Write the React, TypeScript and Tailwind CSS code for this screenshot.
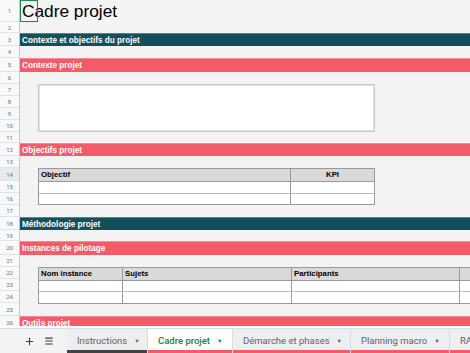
import React from "react";
import { Plus, Menu } from "lucide-react";

// row heights, in the order the sheet shows them
const rowHeights = [22, 11, 13, 12, 14, 12, 12, 12, 12, 12, 11, 13, 12, 13, 12, 12, 12, 13, 11, 14, 12, 12, 12, 12, 13, 14];

const dark = "bg-[#134f5c]";
const pink = "bg-[#f45b69]";

function Band({ color, label, h = "h-[13px]" }: { color: string; label: string; h?: string }) {
  return (
    <div className={`${h} shrink-0 ${color} flex items-start pt-[2px] pl-[2px] text-white font-bold text-[8.2px] leading-[9px] border-t border-t-white/30 whitespace-nowrap`}>
      {label}
    </div>
  );
}

const Gap = ({ h = "h-[12px]" }: { h?: string }) => <div className={`${h} shrink-0`} />;

const tabs = [
  { label: "Instructions", w: "w-[81px]", stripe: "bg-[#434343]", active: false },
  { label: "Cadre projet", w: "w-[85px]", stripe: "bg-[#f45b69]", active: true },
  { label: "Démarche et phases", w: "w-[118px]", stripe: "bg-[#f45b69]", active: false },
  { label: "Planning macro", w: "w-[99px]", stripe: "bg-[#f45b69]", active: false },
  { label: "RACI", w: "w-[60px]", stripe: "bg-[#f45b69]", active: false },
];

export default function App() {
  return (
    <div className="w-[470px] h-[353px] overflow-hidden bg-[#f3f3f3] flex flex-col font-['Liberation_Sans',Arial,sans-serif]">
      <div className="flex h-[326px] shrink-0 overflow-hidden">
        {/* Row numbers */}
        <div className="w-[20px] shrink-0 bg-[#f8f9fa] border-r border-[#c4c7c5] flex flex-col">
          {rowHeights.map((h, i) => (
            <div
              key={i}
              style={{ height: h }}
              className={`shrink-0 flex items-center justify-center border-b border-[#e2e3e3] text-[6px] text-[#6f6f6f] font-['Roboto',sans-serif] ${
                i === 13 ? "bg-[#e8eaed]" : ""
              }`}
            >
              {i + 1}
            </div>
          ))}
        </div>

        {/* Sheet body */}
        <div className="flex-1 flex flex-col min-w-0">
          <div className="h-[22px] shrink-0 relative">
            <div className="absolute left-0 top-0 w-[18px] h-[22px] border border-[#1a8b4a]" />
            <div className="pl-[2px] pt-[1px] text-[17.3px] leading-[20px] text-black whitespace-nowrap">Cadre projet</div>
          </div>
          <Gap h="h-[11px]" />
          <Band color={dark} label="Contexte et objectifs du projet" />
          <Gap />
          <Band color={pink} label="Contexte projet" h="h-[14px]" />
          <Gap />
          <div className="h-[48px] shrink-0 pl-[18px]">
            <div className="w-[337px] h-[48px] bg-white border border-[#c6c6c6] shadow-[inset_0_0_0_1px_#e4e4e4]" />
          </div>
          <Gap h="h-[11px]" />
          <Band color={pink} label="Objectifs projet" />
          <Gap />
          <div className="h-[37px] shrink-0 pl-[18px]">
            <div className="w-[337px] border border-[#9a9a9a] bg-white text-[7.8px] font-bold text-black">
              <div className="flex h-[13px] bg-[#d9d9d9] border-b border-[#9a9a9a]">
                <div className="w-[252px] border-r border-[#9a9a9a] flex items-center pl-[2px]">Objectif</div>
                <div className="flex-1 flex items-center justify-center">KPI</div>
              </div>
              <div className="flex h-[12px] border-b border-[#bcbcbc]">
                <div className="w-[252px] border-r border-[#9a9a9a]" />
                <div className="flex-1" />
              </div>
              <div className="flex h-[10px]">
                <div className="w-[252px] border-r border-[#9a9a9a]" />
                <div className="flex-1" />
              </div>
            </div>
          </div>
          <Gap />
          <Band color={dark} label="Méthodologie projet" />
          <Gap h="h-[11px]" />
          <Band color={pink} label="Instances de pilotage" h="h-[14px]" />
          <Gap />
          <div className="h-[36px] shrink-0 pl-[18px]">
            <div className="w-[440px] border border-[#9a9a9a] bg-white text-[7.8px] font-bold text-black">
              <div className="flex h-[13px] bg-[#d9d9d9] border-b border-[#9a9a9a]">
                <div className="w-[84px] border-r border-[#9a9a9a] flex items-center pl-[2px]">Nom instance</div>
                <div className="w-[169px] border-r border-[#9a9a9a] flex items-center pl-[2px]">Sujets</div>
                <div className="w-[168px] border-r border-[#9a9a9a] flex items-center pl-[2px]">Participants</div>
                <div className="flex-1" />
              </div>
              {[0, 1].map((r) => (
                <div key={r} className={`flex h-[11px] ${r === 0 ? "border-b border-[#bcbcbc]" : ""}`}>
                  <div className="w-[84px] border-r border-[#9a9a9a]" />
                  <div className="w-[169px] border-r border-[#9a9a9a]" />
                  <div className="w-[168px] border-r border-[#9a9a9a]" />
                  <div className="flex-1" />
                </div>
              ))}
            </div>
          </div>
          <Gap h="h-[13px]" />
          <Band color={pink} label="Outils projet" h="h-[14px]" />
        </div>
      </div>

      <div className="h-[2px] shrink-0 bg-white" />

      {/* Sheet tabs */}
      <div className="flex-1 flex items-stretch bg-[#f1f3f4] border-t border-[#dadce0] font-['Roboto',sans-serif] text-[9.5px]">
        <div className="w-[67px] shrink-0 flex items-center pl-[24px] gap-[9px] text-[#3c4043]">
          <Plus size={11} strokeWidth={2.4} />
          <Menu size={10} strokeWidth={2.6} />
        </div>
        {tabs.map((t) => (
          <div
            key={t.label}
            className={`${t.w} shrink-0 relative flex items-center pl-[10px] border-r border-[#dadce0] ${
              t.active ? "bg-white text-[#188038] font-medium" : "bg-[#eceef0] text-[#5f6368]"
            }`}
          >
            <span className="whitespace-nowrap">{t.label}</span>
            <span className="ml-[7px] text-[5.5px]">▼</span>
            <div className={`absolute left-0 right-0 bottom-0 h-[3px] ${t.stripe}`} />
          </div>
        ))}
      </div>
    </div>
  );
}
